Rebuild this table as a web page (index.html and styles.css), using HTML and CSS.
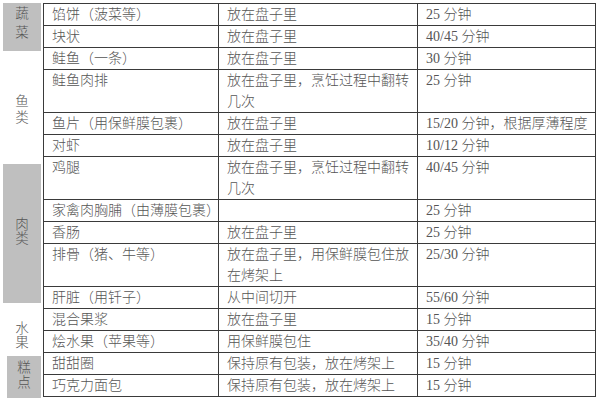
FILE: index.html
```html
<!DOCTYPE html>
<html lang="zh-CN">
<head>
<meta charset="utf-8">
<title>烹饪时间表</title>
<link rel="stylesheet" href="styles.css">
</head>
<body>
<div class="page">
  <div class="cats">
    <div class="cat cat-veg shaded">蔬<br>菜</div>
    <div class="cat cat-fish">鱼<br>类</div>
    <div class="cat cat-meat shaded">肉<br>类</div>
    <div class="cat cat-fruit">水<br>果</div>
    <div class="cat cat-cake shaded">糕<br>点</div>
  </div>
  <table class="grid">
    <colgroup>
      <col class="c-item">
      <col class="c-method">
      <col class="c-time">
    </colgroup>
    <tbody>
      <tr><td>馅饼（菠菜等）</td><td>放在盘子里</td><td>25 分钟</td></tr>
      <tr><td>块状</td><td>放在盘子里</td><td>40/45 分钟</td></tr>
      <tr><td>鲑鱼（一条）</td><td>放在盘子里</td><td>30 分钟</td></tr>
      <tr><td>鲑鱼肉排</td><td>放在盘子里，烹饪过程中翻转<br>几次</td><td>25 分钟</td></tr>
      <tr><td>鱼片（用保鲜膜包裹）</td><td>放在盘子里</td><td>15/20 分钟，根据厚薄程度</td></tr>
      <tr><td>对虾</td><td>放在盘子里</td><td>10/12 分钟</td></tr>
      <tr><td>鸡腿</td><td>放在盘子里，烹饪过程中翻转<br>几次</td><td>40/45 分钟</td></tr>
      <tr><td>家禽肉胸脯（由薄膜包裹）</td><td></td><td>25 分钟</td></tr>
      <tr><td>香肠</td><td>放在盘子里</td><td>25 分钟</td></tr>
      <tr><td>排骨（猪、牛等）</td><td>放在盘子里，用保鲜膜包住放<br>在烤架上</td><td>25/30 分钟</td></tr>
      <tr><td>肝脏（用钎子）</td><td>从中间切开</td><td>55/60 分钟</td></tr>
      <tr><td>混合果浆</td><td>放在盘子里</td><td>15 分钟</td></tr>
      <tr><td>烩水果（苹果等）</td><td>用保鲜膜包住</td><td>35/40 分钟</td></tr>
      <tr><td>甜甜圈</td><td>保持原有包装，放在烤架上</td><td>15 分钟</td></tr>
      <tr><td>巧克力面包</td><td>保持原有包装，放在烤架上</td><td>15 分钟</td></tr>
    </tbody>
  </table>
</div>
</body>
</html>
```

FILE: styles.css
```css
html, body {
  margin: 0;
  padding: 0;
  background: #ffffff;
}

body {
  font-family: "Liberation Serif", "Noto Sans CJK SC", serif;
  font-weight: 300;
  color: #555555;
  font-size: 14px;
}

.page {
  display: flex;
  align-items: flex-start;
  padding: 3px 0 0 3px;
}

.cats {
  display: flex;
  flex-direction: column;
  width: 38px;
  margin-right: 2px;
}

.cat {
  box-sizing: border-box;
  text-align: center;
  font-size: 13.5px;
  color: #555555;
}

.shaded {
  background: #bfbfbf;
}

.cat-veg {
  height: 48px;
  padding-top: 1px;
  line-height: 19px;
}

.cat-fish {
  height: 113px;
  padding-top: 43px;
  line-height: 16px;
}

.cat-meat {
  height: 139px;
  padding-top: 54px;
  line-height: 14px;
}

.cat-fruit {
  height: 53px;
  padding-top: 19px;
  line-height: 14px;
}

.cat-cake {
  height: 42px;
  margin-left: 4px;
  padding-top: 4px;
  line-height: 15px;
}

.grid {
  border-collapse: separate;
  border-spacing: 0;
  table-layout: fixed;
  width: 553px;
  border-top: 1px solid #3a3a3a;
  border-left: 1px solid #3a3a3a;
}

.c-item { width: 175px; }
.c-method { width: 199px; }
.c-time { width: 178px; }

.grid td {
  box-sizing: border-box;
  padding: 0 4px 0 8px;
  line-height: 21px;
  vertical-align: top;
  white-space: nowrap;
  overflow: hidden;
  border-right: 1px solid #3a3a3a;
  border-bottom: 1px solid #3a3a3a;
}
```
